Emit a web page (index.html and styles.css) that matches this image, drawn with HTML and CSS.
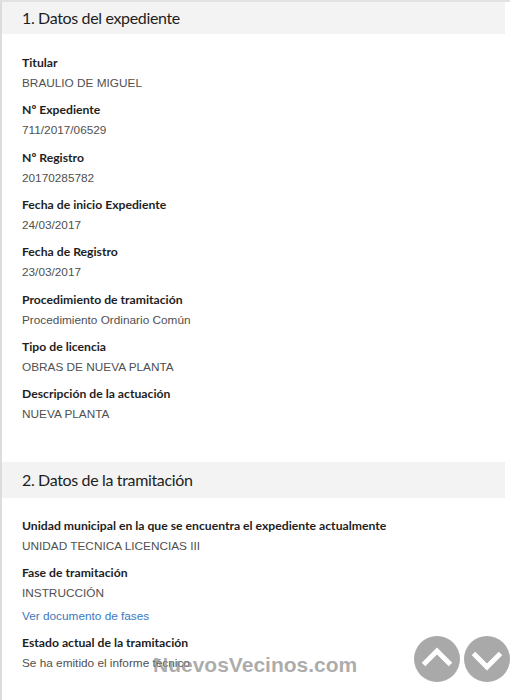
FILE: index.html
```html
<!DOCTYPE html>
<html lang="es">
<head>
<meta charset="utf-8">
<title>Expediente</title>
<link rel="stylesheet" href="styles.css">
</head>
<body>
<div class="page">
  <section class="section first">
    <h2 class="band">1. Datos del expediente</h2>
    <div class="body">
      <div class="field"><div class="label">Titular</div><div class="value">BRAULIO DE MIGUEL</div></div>
      <div class="field"><div class="label">Nº Expediente</div><div class="value">711/2017/06529</div></div>
      <div class="field"><div class="label">Nº Registro</div><div class="value">20170285782</div></div>
      <div class="field"><div class="label">Fecha de inicio Expediente</div><div class="value">24/03/2017</div></div>
      <div class="field"><div class="label">Fecha de Registro</div><div class="value">23/03/2017</div></div>
      <div class="field"><div class="label">Procedimiento de tramitación</div><div class="value">Procedimiento Ordinario Común</div></div>
      <div class="field"><div class="label">Tipo de licencia</div><div class="value">OBRAS DE NUEVA PLANTA</div></div>
      <div class="field"><div class="label">Descripción de la actuación</div><div class="value">NUEVA PLANTA</div></div>
    </div>
  </section>
  <section class="section second">
    <h2 class="band">2. Datos de la tramitación</h2>
    <div class="body">
      <div class="field"><div class="label">Unidad municipal en la que se encuentra el expediente actualmente</div><div class="value">UNIDAD TECNICA LICENCIAS III</div></div>
      <div class="field"><div class="label">Fase de tramitación</div><div class="value">INSTRUCCIÓN</div><a class="link" href="#">Ver documento de fases</a></div>
      <div class="field"><div class="label">Estado actual de la tramitación</div><div class="value">Se ha emitido el informe técnico</div></div>
    </div>
  </section>
</div>
<div class="watermark">NuevosVecinos.com</div>
<div class="scroll-buttons">
  <a class="circle" href="#" aria-label="Subir"><svg width="46" height="46" viewBox="0 0 46 46"><polyline points="9.5,28.5 23,15 36.5,28.5" fill="none" stroke="#fff" stroke-width="5"/></svg></a>
  <a class="circle" href="#" aria-label="Bajar"><svg width="46" height="46" viewBox="0 0 46 46"><polyline points="9.5,17.5 23,31 36.5,17.5" fill="none" stroke="#fff" stroke-width="5"/></svg></a>
</div>
</body>
</html>
```
FILE: styles.css
```css
html, body {
  margin: 0;
  padding: 0;
  background: #fff;
}
body {
  width: 510px;
  height: 700px;
  overflow: hidden;
  position: relative;
  font-family: "Liberation Sans", Arial, sans-serif;
}
.page {
  border-left: 2px solid #dcdcdc;
  border-top: 2px solid #e2e2e2;
  min-height: 698px;
}
.band {
  margin: 0 5px 0 0;
  background: #f3f3f3;
  height: 36px;
  line-height: 36px;
  padding-left: 20px;
  font-family: Lato, "Open Sans", sans-serif;
  font-weight: 400;
  font-size: 16px;
  letter-spacing: -0.35px;
  color: #1e1e1e;
}
.first .band {
  height: 32px;
  line-height: 32px;
}
.body {
  padding: 19px 0 30px 20px;
}
.second .body {
  padding-top: 18px;
}
.field {
  margin-bottom: 7.33px;
}
.label {
  font-family: Lato, "Open Sans", sans-serif;
  font-weight: 700;
  font-size: 12.2px;
  line-height: 20px;
  color: #1e1e1e;
}
.value {
  font-size: 11.8px;
  line-height: 20px;
  color: #505050;
}
.link {
  display: block;
  margin-top: 3px;
  font-size: 11.8px;
  line-height: 20px;
  color: #3b78c0;
  text-decoration: none;
}
.watermark {
  position: absolute;
  left: 153px;
  top: 653px;
  line-height: 24px;
  font-family: "Liberation Sans", Arial, sans-serif;
  font-weight: 700;
  font-size: 21px;
  color: rgba(140, 140, 140, 0.72);
}
.scroll-buttons {
  position: absolute;
  left: 414px;
  top: 636px;
  display: flex;
  gap: 4px;
}
.circle {
  display: block;
  width: 46px;
  height: 46px;
  border-radius: 50%;
  background: #a9a9a9;
}
.circle svg {
  display: block;
}
```
